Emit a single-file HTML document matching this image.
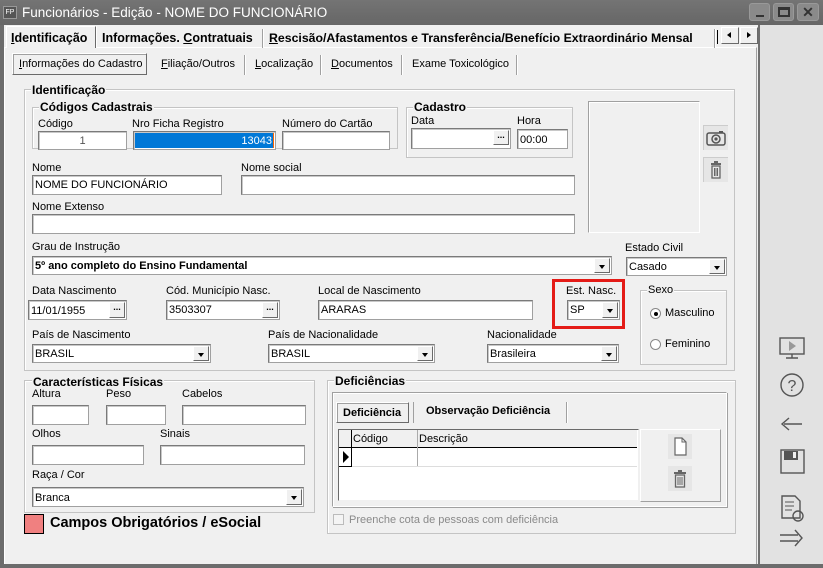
<!DOCTYPE html>
<html><head><meta charset="utf-8"><style>
*{box-sizing:border-box;margin:0;padding:0}
body{width:823px;height:568px;overflow:hidden;background:#f0f0f0;font-family:"Liberation Sans",sans-serif;font-size:11px;color:#000;position:relative}
.a{position:absolute}
.t{position:absolute;white-space:nowrap;font-size:11px}
.b{font-weight:bold}
.in{position:absolute;background:#fff;border:1px solid #a0a0a0;border-top-color:#7a7a7a;border-left-color:#7a7a7a;box-shadow:inset 1px 1px 0 #c8c8c8;font-size:11px;padding:3px 2px 0;white-space:nowrap;overflow:hidden}
.grp{position:absolute;border:1px solid #c4c4c4;box-shadow:inset 1px 1px 0 #fff}
.gt{position:absolute;top:-8px;left:6px;background:#f0f0f0;font-weight:bold;font-size:12px;padding:0 1px;white-space:nowrap}
.dd{position:absolute;right:1px;top:1px;bottom:1px;width:16px;background:#f0f0f0;border:1px solid #fff;border-right-color:#6a6a6a;border-bottom-color:#6a6a6a}
.dd:after{content:"";position:absolute;left:4px;top:6px;border-left:3.5px solid transparent;border-right:3.5px solid transparent;border-top:4px solid #000}
.el{position:absolute;right:1px;top:1px;bottom:1px;width:16px;background:#f0f0f0;border:1px solid #fff;border-right-color:#6a6a6a;border-bottom-color:#6a6a6a;font-size:9px;font-weight:bold;text-align:center;line-height:8px}
.tab{position:absolute;border-right:1px solid #a0a0a0;box-shadow:1px 0 0 #fff;white-space:nowrap}
u{text-decoration:underline}
</style></head><body>
<!-- title -->
<div class="a" style="left:0;top:0;width:823px;height:25px;background:linear-gradient(#747474,#666)"></div>
<div class="a" style="left:3px;top:6px;width:14px;height:13px;background:#555;border:1px solid #999;color:#fff;font-size:7px;text-align:center;line-height:11px">FP</div>
<div class="t" style="left:22px;top:5px;font-size:13.5px;color:#fff">Funcionários - Edição - NOME DO FUNCIONÁRIO</div>
<div class="a" style="left:749px;top:3px;width:21px;height:18px;background:#8a8a8a;border-radius:3px;border:1px solid #999"><div class="a" style="left:6px;top:11px;width:8px;height:2px;background:#333"></div></div>
<div class="a" style="left:773px;top:3px;width:21px;height:18px;background:#8a8a8a;border-radius:3px;border:1px solid #999"><div class="a" style="left:4px;top:3px;width:12px;height:10px;border:2px solid #333;border-top-width:3px"></div></div>
<div class="a" style="left:797px;top:3px;width:22px;height:18px;background:#8a8a8a;border-radius:3px;border:1px solid #999;color:#333;font-weight:bold;font-size:14px;text-align:center;line-height:16px">✕</div>
<!-- frame -->
<div class="a" style="left:0;top:25px;width:4px;height:543px;background:#6c6c6c"></div>
<div class="a" style="left:0;top:564px;width:823px;height:4px;background:#6c6c6c"></div>
<div class="a" style="left:760px;top:25px;width:63px;height:539px;background:#e2e2e2"></div>
<div class="a" style="left:758px;top:25px;width:2px;height:539px;background:#6f6f6f"></div>
<!-- main tabs -->
<div class="a" style="left:4px;top:47px;width:753px;height:517px;border:1px solid #fff;border-right-color:#a0a0a0;border-bottom:none"></div>
<div class="tab b" style="left:6px;top:26px;height:22px;width:90px;font-size:12.5px;padding:4px 0 0 4px;background:#f0f0f0;border:1px solid #fff;border-bottom:none;border-right-color:#6a6a6a"><u>I</u>dentificação</div>
<div class="tab b" style="left:97px;top:29px;height:19px;width:166px;font-size:12.5px;padding:2px 0 0 5px">Informações. <u>C</u>ontratuais</div>
<div class="tab b" style="left:263px;top:29px;height:19px;width:452px;font-size:12.3px;padding:2px 0 0 6px"><u>R</u>escisão/Afastamentos e Transferência/Benefício Extraordinário Mensal</div>
<div class="a" style="left:717px;top:30px;width:3px;height:14px;border-left:1px solid #000"></div>
<div class="a" style="left:721px;top:27px;width:18px;height:17px;background:#f0f0f0;border:1px solid #fff;border-right-color:#6a6a6a;border-bottom-color:#6a6a6a"><div class="a" style="left:5px;top:4px;border-top:3.5px solid transparent;border-bottom:3.5px solid transparent;border-right:4px solid #000"></div></div>
<div class="a" style="left:740px;top:27px;width:18px;height:17px;background:#f0f0f0;border:1px solid #fff;border-right-color:#6a6a6a;border-bottom-color:#6a6a6a"><div class="a" style="left:6px;top:4px;border-top:3.5px solid transparent;border-bottom:3.5px solid transparent;border-left:4px solid #000"></div></div>
<!-- sub tabs -->
<div class="a" style="left:12px;top:53px;width:135px;height:22px;border:1px solid #fff;border-right-color:#6a6a6a;border-bottom-color:#6a6a6a;box-shadow:inset 1px 1px 0 #a0a0a0;padding:4px 0 0 6px;white-space:nowrap"><u>I</u>nformações do Cadastro</div>
<div class="tab" style="left:152px;top:55px;height:20px;width:93px;padding:3px 0 0 9px"><u>F</u>iliação/Outros</div>
<div class="tab" style="left:245px;top:55px;height:20px;width:76px;padding:3px 0 0 10px"><u>L</u>ocalização</div>
<div class="tab" style="left:321px;top:55px;height:20px;width:81px;padding:3px 0 0 10px"><u>D</u>ocumentos</div>
<div class="tab" style="left:402px;top:55px;height:20px;width:115px;padding:3px 0 0 10px">Exame Toxicológico</div>

<!-- Identificacao group -->
<div class="grp" style="left:24px;top:89px;width:711px;height:282px"><div class="gt" style="left:6px;top:-7px">Identificação</div></div>
<div class="grp" style="left:32px;top:107px;width:366px;height:42px"><div class="gt">Códigos Cadastrais</div></div>
<div class="t" style="left:38px;top:118px">Código</div>
<div class="in" style="left:38px;top:131px;width:89px;height:19px;text-align:center;color:#555">1</div>
<div class="t" style="left:132px;top:118px">Nro Ficha Registro</div>
<div class="in" style="left:133px;top:131px;width:143px;height:19px;padding:1px"><div style="background:#0078d7;color:#fff;text-align:right;height:15px;padding:2px 1px 0 0;border-right:1px solid #f60">13043</div></div>
<div class="t" style="left:282px;top:118px">Número do Cartão</div>
<div class="in" style="left:282px;top:131px;width:108px;height:19px"></div>

<div class="grp" style="left:406px;top:107px;width:167px;height:51px"><div class="gt">Cadastro</div></div>
<div class="t" style="left:411px;top:115px">Data</div>
<div class="in" style="left:411px;top:128px;width:100px;height:21px"><div class="el" style="top:1px;bottom:3px">...</div></div>
<div class="t" style="left:517px;top:115px">Hora</div>
<div class="in" style="left:517px;top:129px;width:51px;height:20px;padding-top:4px">00:00</div>

<div class="a" style="left:588px;top:101px;width:112px;height:132px;border:1px solid #a0a0a0;border-right-color:#fff;border-bottom-color:#fff;box-shadow:inset 1px 1px 0 #fff"></div>
<div class="a" style="left:703px;top:125px;width:25px;height:25px;background:#e6e6e6;border-left:1px solid #ccc;border-top:1px solid #ccc">
<svg width="24" height="24" viewBox="0 0 24 24" style="position:absolute;left:0;top:0"><rect x="3" y="7" width="18" height="12" rx="2" fill="none" stroke="#555" stroke-width="1.5"/><rect x="15" y="5" width="4" height="2" fill="#555"/><circle cx="12" cy="13" r="4" fill="none" stroke="#555" stroke-width="1.5"/><circle cx="12" cy="13" r="1.6" fill="#555"/></svg></div>
<div class="a" style="left:703px;top:157px;width:25px;height:25px;background:#e6e6e6;border-left:1px solid #ccc;border-top:1px solid #ccc">
<svg width="24" height="24" viewBox="0 0 24 24" style="position:absolute;left:0;top:0"><rect x="7" y="5" width="10" height="2" fill="#666"/><rect x="10" y="3" width="4" height="2" fill="#666"/><rect x="8" y="8" width="8" height="12" fill="none" stroke="#666" stroke-width="1.3"/><path d="M10.5 10v8M12 10v8M13.5 10v8" stroke="#666"/></svg></div>

<div class="t" style="left:32px;top:162px">Nome</div>
<div class="in" style="left:32px;top:175px;width:190px;height:20px">NOME DO FUNCIONÁRIO</div>
<div class="t" style="left:241px;top:162px">Nome social</div>
<div class="in" style="left:241px;top:175px;width:334px;height:20px"></div>
<div class="t" style="left:32px;top:201px">Nome Extenso</div>
<div class="in" style="left:32px;top:214px;width:543px;height:20px"></div>

<div class="t" style="left:32px;top:241px">Grau de Instrução</div>
<div class="in b" style="left:32px;top:256px;width:580px;height:19px;font-size:11px">5º ano completo do Ensino Fundamental<div class="dd"></div></div>
<div class="t" style="left:625px;top:242px">Estado Civil</div>
<div class="in" style="left:626px;top:257px;width:101px;height:19px">Casado<div class="dd"></div></div>

<div class="t" style="left:32px;top:285px">Data Nascimento</div>
<div class="in" style="left:28px;top:300px;width:99px;height:20px;padding-top:4px">11/01/1955<div class="el">...</div></div>
<div class="t" style="left:166px;top:285px">Cód. Município Nasc.</div>
<div class="in" style="left:166px;top:300px;width:114px;height:20px">3503307<div class="el">...</div></div>
<div class="t" style="left:318px;top:285px">Local de Nascimento</div>
<div class="in" style="left:318px;top:300px;width:215px;height:20px">ARARAS</div>
<div class="a" style="left:552px;top:279px;width:73px;height:50px;border:3px solid #e41b17"></div>
<div class="t" style="left:566px;top:285px">Est. Nasc.</div>
<div class="in" style="left:567px;top:300px;width:53px;height:20px">SP<div class="dd"></div></div>
<div class="grp" style="left:640px;top:290px;width:87px;height:75px"><div class="gt" style="font-weight:normal;font-size:11px;top:-7px">Sexo</div></div>
<div class="a" style="left:650px;top:308px;width:11px;height:11px;border-radius:50%;border:1px solid #888;background:#fff"><div class="a" style="left:3px;top:3px;width:4px;height:4px;border-radius:50%;background:#000"></div></div>
<div class="t" style="left:665px;top:307px">Masculino</div>
<div class="a" style="left:650px;top:339px;width:11px;height:11px;border-radius:50%;border:1px solid #888;background:#fff"></div>
<div class="t" style="left:665px;top:338px">Feminino</div>

<div class="t" style="left:32px;top:329px">País de Nascimento</div>
<div class="in" style="left:32px;top:344px;width:179px;height:19px">BRASIL<div class="dd"></div></div>
<div class="t" style="left:268px;top:329px">País de Nacionalidade</div>
<div class="in" style="left:268px;top:344px;width:167px;height:19px">BRASIL<div class="dd"></div></div>
<div class="t" style="left:487px;top:329px">Nacionalidade</div>
<div class="in" style="left:487px;top:344px;width:132px;height:19px">Brasileira<div class="dd"></div></div>

<!-- caracteristicas -->
<div class="grp" style="left:24px;top:380px;width:291px;height:133px"><div class="gt" style="left:7px;top:-6px">Características Físicas</div></div>
<div class="t" style="left:32px;top:388px">Altura</div>
<div class="t" style="left:106px;top:388px">Peso</div>
<div class="t" style="left:182px;top:388px">Cabelos</div>
<div class="in" style="left:32px;top:405px;width:57px;height:20px"></div>
<div class="in" style="left:106px;top:405px;width:60px;height:20px"></div>
<div class="in" style="left:182px;top:405px;width:124px;height:20px"></div>
<div class="t" style="left:32px;top:428px">Olhos</div>
<div class="t" style="left:160px;top:428px">Sinais</div>
<div class="in" style="left:32px;top:445px;width:112px;height:20px"></div>
<div class="in" style="left:160px;top:445px;width:145px;height:20px"></div>
<div class="t" style="left:32px;top:469px">Raça / Cor</div>
<div class="in" style="left:32px;top:487px;width:272px;height:20px;padding-top:4px">Branca<div class="dd"></div></div>
<div class="a" style="left:24px;top:514px;width:20px;height:20px;background:#f08080;border:1px solid #000"></div>
<div class="t b" style="left:50px;top:515px;font-size:14.5px">Campos Obrigatórios / eSocial</div>

<!-- deficiencias -->
<div class="grp" style="left:327px;top:380px;width:409px;height:154px"><div class="gt" style="left:6px;top:-7px">Deficiências</div></div>
<div class="a" style="left:332px;top:392px;width:395px;height:115px;border:1px solid #a0a0a0;border-right-color:#fff;border-bottom-color:#fff;box-shadow:1px 1px 0 #a0a0a0,inset 1px 1px 0 #fff"></div>
<div class="a b" style="left:336px;top:402px;width:73px;height:21px;border:1px solid #fff;border-right-color:#6a6a6a;border-bottom-color:#6a6a6a;box-shadow:inset 1px 1px 0 #a0a0a0;padding:4px 0 0 6px">Deficiência</div>
<div class="tab b" style="left:413px;top:402px;width:154px;height:21px;padding:3px 0 0 12px;border-left:1px solid #a0a0a0">Observação Deficiência</div>
<div class="a" style="left:338px;top:429px;width:301px;height:72px;background:#fff;border:1px solid #6a6a6a;border-right-color:#f0f0f0;border-bottom-color:#f0f0f0"></div>
<div class="a" style="left:339px;top:430px;width:298px;height:18px;background:#f0f0f0;border-bottom:1px solid #000"></div>
<div class="a" style="left:351px;top:430px;width:1px;height:37px;background:#000"></div>
<div class="a" style="left:339px;top:466px;width:13px;height:1px;background:#000"></div>
<div class="a" style="left:417px;top:430px;width:1px;height:37px;background:#aaa"></div>
<div class="a" style="left:352px;top:466px;width:285px;height:1px;background:#ddd"></div>
<div class="t" style="left:353px;top:433px">Código</div>
<div class="t" style="left:419px;top:433px">Descrição</div>
<div class="a" style="left:343px;top:451px;border-top:6px solid transparent;border-bottom:6px solid transparent;border-left:6px solid #000"></div>
<div class="a" style="left:640px;top:429px;width:81px;height:73px;border:1px solid #fff;border-right-color:#a0a0a0;border-bottom-color:#a0a0a0"></div>
<div class="a" style="left:668px;top:434px;width:24px;height:25px;background:#e6e6e6"><svg width="24" height="25" style="position:absolute;left:0;top:0"><path d="M7 4h7l4 4v13H7z" fill="#fff" stroke="#666" stroke-width="1.2"/><path d="M14 4v4h4" fill="none" stroke="#666"/></svg></div>
<div class="a" style="left:668px;top:466px;width:24px;height:25px;background:#e6e6e6"><svg width="24" height="25" style="position:absolute;left:0;top:0"><rect x="6" y="6" width="12" height="2" fill="#666"/><rect x="10" y="4" width="4" height="2" fill="#666"/><rect x="7.5" y="9" width="9" height="12" fill="none" stroke="#666" stroke-width="1.3"/><path d="M10 11v8M12 11v8M14 11v8" stroke="#666"/></svg></div>
<div class="a" style="left:333px;top:514px;width:11px;height:11px;border:1px solid #bbb;background:#f4f4f4"></div>
<div class="t" style="left:349px;top:514px;color:#8a8a8a">Preenche cota de pessoas com deficiência</div>

<!-- right toolbar -->
<svg class="a" style="left:770px;top:330px" width="50" height="230" viewBox="0 0 50 230">
<g fill="none" stroke="#555" stroke-width="1.4">
<rect x="10" y="8" width="24" height="16"/><path d="M16 28h12M22 24v4"/>
<circle cx="22" cy="55" r="11"/>
<path d="M32 94H14M19 88l-7 6 7 6"/>
<rect x="11" y="120" width="23" height="23"/>
<path d="M12 166h13l5 5v17H12z"/><circle cx="28" cy="186" r="5"/>
<path d="M10 205h18M10 211h18M25 200l7 8-7 8"/>
</g>
<path d="M19 11v10l7-5z" fill="#999"/>
<text x="22" y="61" font-family="Liberation Sans" font-size="16" text-anchor="middle" fill="#555">?</text>
<rect x="14" y="121" width="14" height="9" fill="#555"/><rect x="23" y="122" width="3" height="6" fill="#eee"/>
<path d="M15 172h9M15 176h9M15 180h7" stroke="#555"/>
</svg>
</body></html>
